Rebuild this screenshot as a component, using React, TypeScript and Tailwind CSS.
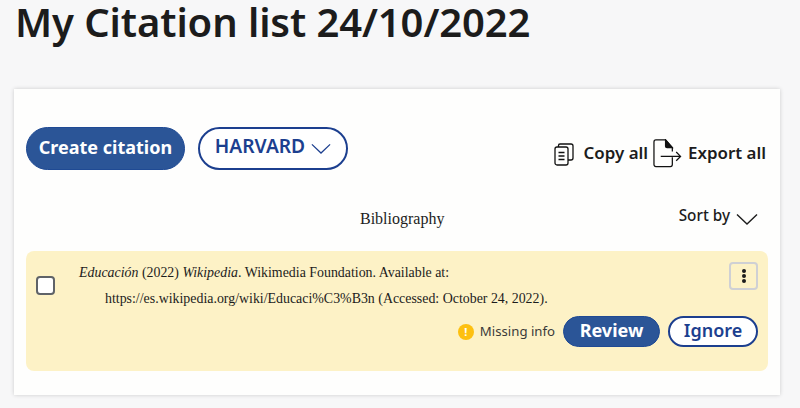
import React from 'react';

function Chevron({ className }: { className: string }) {
  return (
    <svg viewBox="0 0 22 12" fill="none" stroke="currentColor" strokeWidth="1.4" className={className}>
      <path d="M1 1.5 L11 11 L21 1.5" />
    </svg>
  );
}

function CopyIcon() {
  return (
    <svg viewBox="0 0 20 24" fill="none" stroke="#111" strokeWidth="1.3" className="w-5 h-6 shrink-0">
      <rect x="1" y="5" width="13" height="18" rx="2" />
      <path d="M4.5 5 V3.5 A1.5 1.5 0 0 1 6 2 H17 A2 2 0 0 1 19 4 V16 A2 2 0 0 1 17 18 H14" />
      <path d="M4.5 10.5 H10.5 M4.5 14 H10.5 M4.5 17.5 H10.5" />
    </svg>
  );
}

function ExportIcon() {
  return (
    <svg viewBox="0 0 30 30" fill="none" stroke="#111" strokeWidth="1.3" className="w-[29px] h-[29px] shrink-0">
      <path d="M20 19 V26.5 A2 2 0 0 1 18 28.5 H3 A2 2 0 0 1 1 26.5 V3 A2 2 0 0 1 3 1 H13 L20 9 V13" />
      <path d="M13 1 L13 7.5 A1.5 1.5 0 0 0 14.5 9 H20 Z" fill="#111" />
      <path d="M8 18 H28 M24 13.5 L28.5 18 L24 22.5" />
    </svg>
  );
}

export default function App() {
  return (
    <div className="h-[408px] overflow-hidden bg-[#f7f7f8] font-['Noto_Sans',sans-serif] text-[#1c1c1c]">
      <h1 className="h-[89px] pl-[15px] text-[40px] leading-[44px] font-semibold -tracking-[0.1px] whitespace-nowrap">My Citation list 24/10/2022</h1>
      <div className="ml-[14px] w-[766px] h-[306px] bg-[#fefefd] shadow-[0_0_4px_rgba(0,0,0,0.18)] px-3 pt-[38px]">
        <div className="flex items-start">
          <button className="w-[159px] h-[43px] pb-1 rounded-full bg-[#2b5597] border border-[#1f4a94] text-white text-lg font-bold">Create citation</button>
          <button className="ml-[13px] w-[150px] h-[43px] pb-1 rounded-full bg-white border-2 border-[#1c3f8f] text-[#1c3f8f] text-[19.2px] font-semibold flex items-center justify-center gap-[6px]">
            HARVARD
            <Chevron className="w-5 h-[11px] mt-1" />
          </button>
          <div className="ml-auto mr-[2px] flex items-center mt-[12px] text-[16.9px] font-semibold">
            <CopyIcon />
            <span className="ml-[10px] pb-[2px]">Copy all</span>
            <span className="ml-[5px]"><ExportIcon /></span>
            <span className="ml-[6px] pb-[2px]">Export all</span>
          </div>
        </div>
        <div className="relative flex items-center justify-end h-6 mt-[35px] pr-[10px]">
          <span className="absolute left-[334px] top-[2px] font-['Liberation_Serif',serif] text-base">Bibliography</span>
          <span className="text-[15.3px] font-medium pb-1">Sort by</span>
          <Chevron className="ml-[6px] w-[22px] h-3 mt-1" />
        </div>
        <div className="mt-[22px] h-[120px] rounded-lg bg-[#fdf2c6] flex">
          <div className="ml-[10px] mt-[25px] w-[19px] h-[19px] rounded-[4px] border-2 border-[#5f6368] bg-white shrink-0" />
          <div className="flex-1 pl-[24px] pr-[10px] pt-[8px]">
            <div className="flex items-start">
              <p className="flex-1 pt-px font-['Liberation_Serif',serif] text-[13.9px] leading-[26px]">
                <span className="block"><i>Educación</i> (2022) <i>Wikipedia</i>. Wikimedia Foundation. Available at:</span>
                <span className="block pl-[26px]">https://es.wikipedia.org/wiki/Educaci%C3%B3n (Accessed: October 24, 2022).</span>
              </p>
              <div className="mt-[3px] w-[29px] h-[28px] rounded-[4px] border-2 border-[#cfd0d4] flex flex-col items-center justify-center gap-[1px] shrink-0">
                <span className="w-1 h-1 rounded-full bg-[#1c1c1c]" />
                <span className="w-1 h-1 rounded-full bg-[#1c1c1c]" />
                <span className="w-1 h-1 rounded-full bg-[#1c1c1c]" />
              </div>
            </div>
            <div className="flex items-center justify-end mt-[4px]">
              <span className="w-4 h-4 rounded-full bg-[#fdc010] text-white text-[11px] font-bold leading-4 text-center">!</span>
              <span className="ml-[6px] text-[13.2px] text-[#3a3a3a]">Missing info</span>
              <button className="ml-2 w-[97px] h-[31px] pb-1 rounded-full bg-[#2b5597] border border-[#1f4a94] text-white text-lg font-bold leading-none">Review</button>
              <button className="ml-2 w-[90px] h-[31px] pb-1 rounded-full bg-white border-2 border-[#1c3f8f] text-[#1c3f8f] text-lg font-semibold leading-none">Ignore</button>
            </div>
          </div>
        </div>
      </div>
    </div>
  );
}
